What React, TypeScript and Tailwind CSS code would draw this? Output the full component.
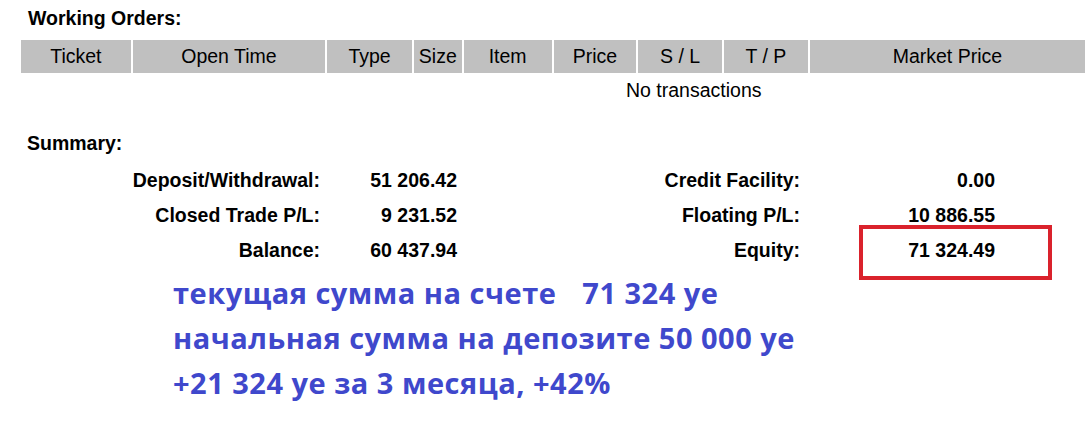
import React from "react";

const cols: { label: string; w: number }[] = [
  { label: "Ticket", w: 110 },
  { label: "Open Time", w: 193 },
  { label: "Type", w: 85 },
  { label: "Size", w: 48 },
  { label: "Item", w: 88 },
  { label: "Price", w: 83 },
  { label: "S / L", w: 84 },
  { label: "T / P", w: 84 },
  { label: "Market Price", w: 276 },
];

const rows = [
  ["Deposit/Withdrawal:", "51 206.42", "Credit Facility:", "0.00"],
  ["Closed Trade P/L:", "9 231.52", "Floating P/L:", "10 886.55"],
  ["Balance:", "60 437.94", "Equity:", "71 324.49"],
];

export default function App() {
  return (
    <div
      className="w-[1085px] h-[427px] bg-white overflow-hidden text-black"
      style={{ fontFamily: '"Liberation Sans", Arial, sans-serif' }}
    >
      <div className="pl-[28px] pt-[8px] h-[40px] text-[19.5px] leading-[20px] font-bold">
        Working Orders:
      </div>
      <div className="flex gap-[2px] pl-[21px] h-[33px]">
        {cols.map((c) => (
          <div
            key={c.label}
            className="bg-[#c0c0c0] flex items-center justify-center text-[19.5px] leading-none"
            style={{ width: c.w }}
          >
            {c.label}
          </div>
        ))}
      </div>
      <div className="h-[36px] flex items-center pl-[626px] text-[19.5px]">No transactions</div>
      <div className="pl-[27px] mt-[24px] leading-[20px] text-[19.5px] font-bold">Summary:</div>
      <div className="grid grid-cols-[320px_137px_343px_195px] auto-rows-[35px] text-[19.5px] font-bold pt-[10px]">
        {rows.map((r, i) => (
          <React.Fragment key={i}>
            <div className="text-right self-center">{r[0]}</div>
            <div className="text-right self-center">{r[1]}</div>
            <div className="text-right self-center">{r[2]}</div>
            <div className="relative text-right self-center">
              {r[3]}
              {i === 2 && (
                <div className="absolute left-[59px] top-[-11px] w-[193px] h-[55px] border-[4px] border-[#da222c]" />
              )}
            </div>
          </React.Fragment>
        ))}
      </div>
      <div
        className="pl-[173px] pt-[2px] text-[#3f48cc] font-bold text-[29px] leading-[45px] tracking-[0.5px]"
        style={{ fontFamily: '"Open Sans", "Noto Sans", sans-serif' }}
      >
        <div>
          текущая сумма на счете<span className="inline-block w-[26px]" />71 324 уе
        </div>
        <div>начальная сумма на депозите 50 000 уе</div>
        <div>+21 324 уе за 3 месяца, +42%</div>
      </div>
    </div>
  );
}
